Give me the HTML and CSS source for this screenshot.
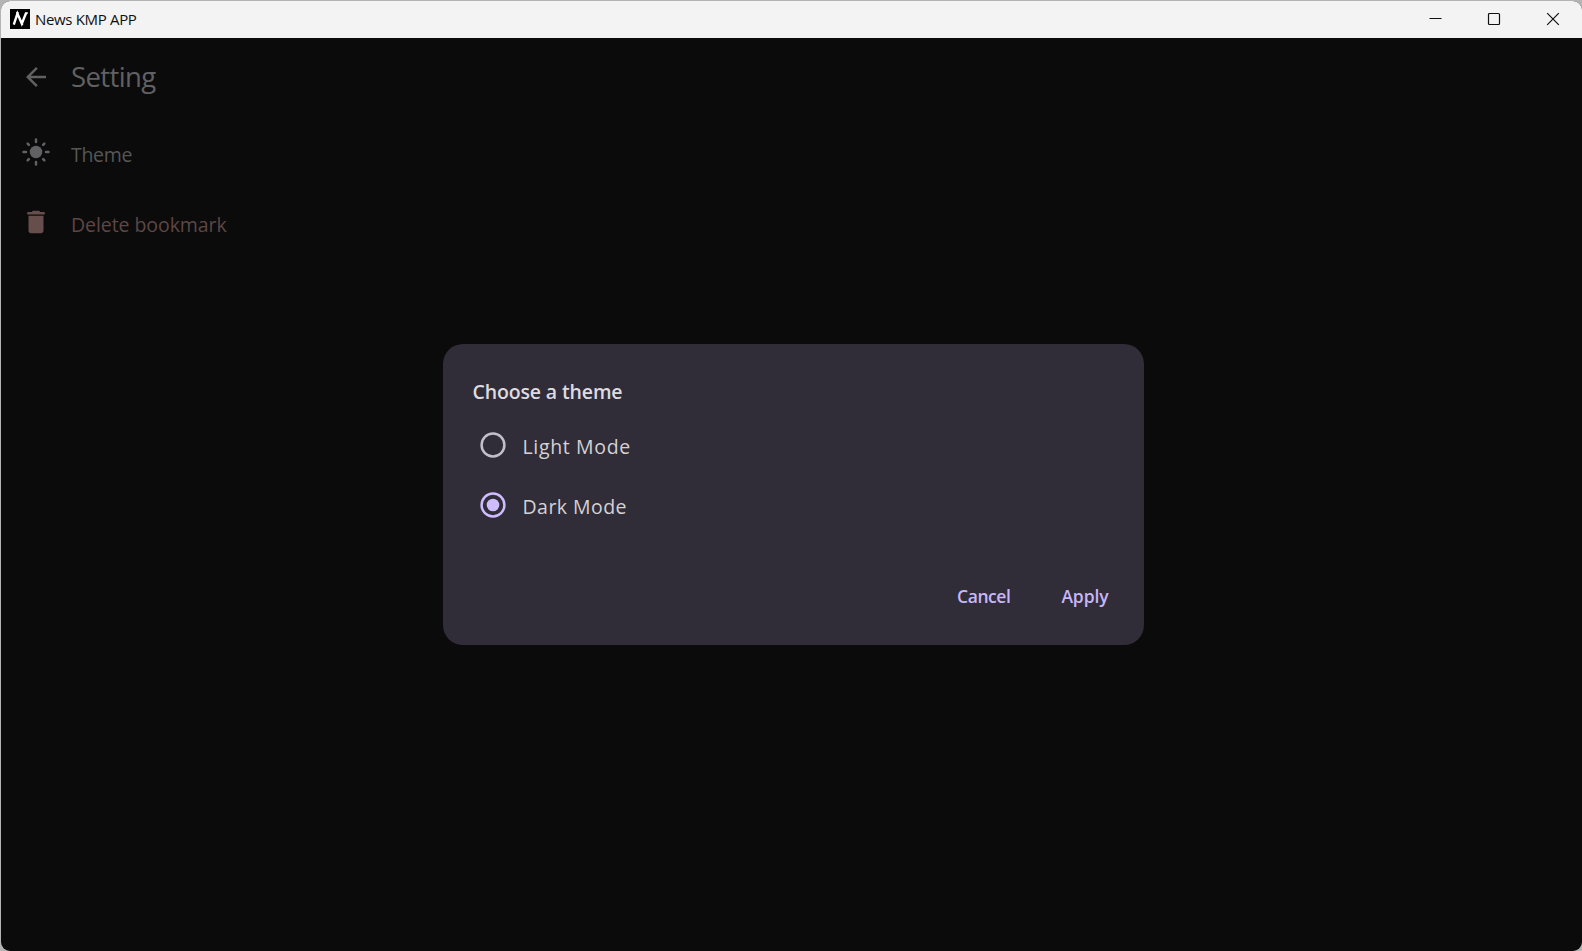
FILE: index.html
```html
<!DOCTYPE html>
<html lang="en">
<head>
<meta charset="utf-8">
<title>News KMP APP</title>
<link rel="stylesheet" href="styles.css">
</head>
<body>
<div class="window">
  <header class="titlebar">
    <svg class="logo" viewBox="0 0 20 20"><path fill="#000" d="M0 0h20v20H0z"/><path d="M3.8 15.6L7.4 4.6l4.4 10L16.2 3.8" fill="none" stroke="#fff" stroke-width="2.4"/><path d="M6 4h2.8M11 15.4h2.2M15.4 4h2.4" stroke="#fff" stroke-width="1.4"/></svg>
    <span class="app-name">News KMP APP</span>
    <div class="controls">
      <svg viewBox="0 0 14 14"><path d="M1.5 6.5h12"/></svg>
      <svg viewBox="0 0 14 14"><rect x="1.5" y="1.5" width="11" height="11" rx="1"/></svg>
      <svg viewBox="0 0 14 14"><path d="M1.2 1.2l11.6 11.6M12.8 1.2L1.2 12.8"/></svg>
    </div>
  </header>
  <main class="screen">
    <div class="row heading">
      <svg class="icon" viewBox="0 0 24 24"><path d="M20 11H7.83l5.59-5.59L12 4l-8 8 8 8 1.41-1.41L7.83 13H20v-2z"/></svg>
      <h1 class="title">Setting</h1>
    </div>
    <div class="row option">
      <svg class="icon" viewBox="0 0 24 24"><circle cx="12" cy="12" r="5"/><path class="rays" d="M12 2v2M12 20v2M2 12h2M20 12h2M5.3 5.3l1 1M17.7 17.7l1 1M5.3 18.7l1-1M17.7 6.3l1-1"/></svg>
      <span class="label theme">Theme</span>
    </div>
    <div class="row option danger">
      <svg class="icon" viewBox="0 0 24 24"><path d="M6 19c0 1.1.9 2 2 2h8c1.1 0 2-.9 2-2V7H6v12zM19 4h-3.5l-1-1h-5l-1 1H5v2h14V4z"/></svg>
      <span class="label delete">Delete bookmark</span>
    </div>
  </main>
  <section class="dialog" role="dialog">
    <h2 class="dialog-title"><span>Choose a theme</span></h2>
    <div class="choice">
      <svg class="radio" viewBox="0 0 30 30"><circle class="ring" cx="15" cy="15" r="11.4"/></svg>
      <span class="light">Light Mode</span>
    </div>
    <div class="choice">
      <svg class="radio selected" viewBox="0 0 30 30"><circle class="ring" cx="15" cy="15" r="11.4"/><circle class="dot" cx="15" cy="15" r="6.3"/></svg>
      <span class="dark">Dark Mode</span>
    </div>
    <div class="actions">
      <span class="cancel">Cancel</span>
      <span class="apply">Apply</span>
    </div>
  </section>
</div>
</body>
</html>
```
FILE: styles.css
```css
* { box-sizing: border-box; }
body {
  margin: 0;
  height: 951px;
  padding: 1px 0 0 1px;
  background: #b4b4b4;
  font-family: "Open Sans", "Noto Sans", sans-serif;
  overflow: hidden;
}
.window {
  position: relative;
  height: 950px;
  border-radius: 9px;
  overflow: hidden;
  background: #0b0b0b;
}
.titlebar {
  height: 37px;
  display: flex;
  align-items: center;
  padding-left: 9px;
  background: #f2f3f2;
  color: #111;
}
.logo { width: 20px; height: 20px; margin-bottom: 1px; }
.app-name {
  margin-left: 5px;
  padding-bottom: 2px;
  font-size: 15px;
  letter-spacing: -0.33px;
  white-space: nowrap;
}
.controls {
  margin: 0 22px 1px auto;
  display: flex;
  gap: 45px;
}
.controls svg {
  width: 14px;
  height: 14px;
  fill: none;
  stroke: #111;
  stroke-width: 1.2;
}
.screen { color: #616063; }
.row {
  display: flex;
  align-items: center;
  gap: 20px;
  padding-left: 20px;
  white-space: nowrap;
}
.heading { height: 78px; }
.option { height: 70px; }
.heading + .option { margin-top: 1px; }
.icon { width: 30px; height: 30px; fill: currentColor; }
.rays {
  stroke: currentColor;
  stroke-width: 2;
  stroke-linecap: round;
}
.title {
  margin: 0;
  padding-bottom: 1px;
  font-size: 27.5px;
  font-weight: 400;
  letter-spacing: -0.6px;
}
.label {
  font-size: 19.5px;
  padding-top: 4px;
  color: #565656;
}
.theme { letter-spacing: -0.3px; }
.delete { letter-spacing: -0.07px; }
.danger { color: #664e4c; }
.danger .label { color: #5d4645; }
.dialog {
  position: absolute;
  left: 441.5px;
  top: 343px;
  width: 701px;
  height: 301px;
  padding: 31px 30px 30px;
  border-radius: 20px;
  background: #302d38;
  color: #dedbe0;
}
.dialog-title {
  margin: 0;
  height: 40px;
  padding-top: 3px;
  font-size: 19.5px;
  font-weight: 600;
  line-height: 27px;
  letter-spacing: -0.14px;
}
.choice {
  height: 60px;
  display: flex;
  align-items: center;
  gap: 15px;
  padding-left: 5.5px;
  font-size: 19.5px;
  color: #d5d1d5;
}
.choice span { padding-top: 2px; margin-left: -0.5px; }
.radio { width: 30px; height: 30px; color: #c3bec9; }
.radio.selected { color: #cfbcff; }
.ring { fill: none; stroke: currentColor; stroke-width: 2.5; }
.dot { fill: currentColor; }
.light { letter-spacing: 0.65px; }
.dark { letter-spacing: 0.45px; }
.actions {
  display: flex;
  justify-content: flex-end;
  gap: 51px;
  padding: 49px 5px 0 0;
  font-size: 17.5px;
  font-weight: 600;
  line-height: 24px;
  color: #c8b6f7;
}
.cancel { letter-spacing: -0.45px; }
.apply { letter-spacing: -0.1px; }
```
